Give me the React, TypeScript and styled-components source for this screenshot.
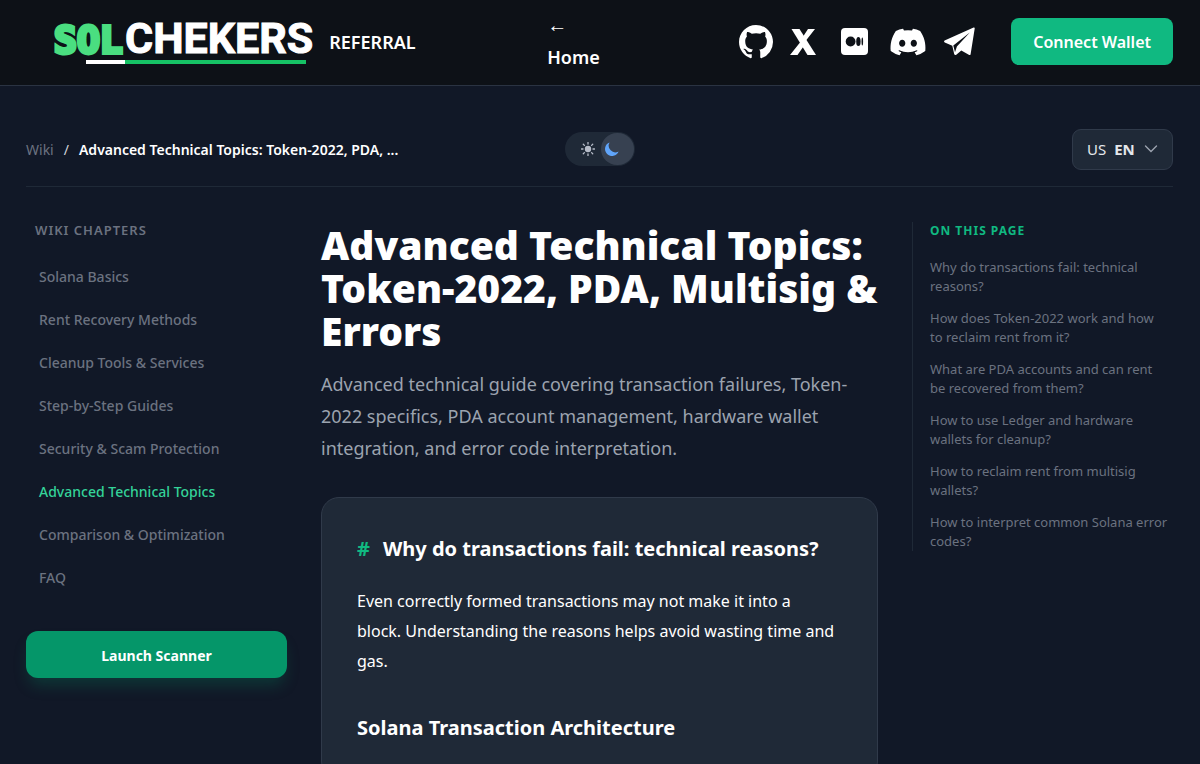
import React, { useState } from "react";
import styled, { createGlobalStyle } from "styled-components";
import { FaDiscord } from "react-icons/fa6";
import { BsGithub } from "react-icons/bs";

const GlobalStyle = createGlobalStyle`
  *, *::before, *::after { box-sizing: border-box; }
  html { scrollbar-width: none; }
  body {
    margin: 0;
    background: #111827;
    color: #fff;
    font-family: "Noto Sans", "Open Sans", sans-serif;
    font-size: 16px;
    -webkit-font-smoothing: antialiased;
  }
  h1, h2, h3, p, ul, ol { margin: 0; padding: 0; }
  ul, ol { list-style: none; }
  a { color: inherit; text-decoration: none; }
  button, select, input { font: inherit; }
`;

const Header = styled.header`
  display: flex;
  align-items: center;
  justify-content: space-between;
  height: 86px;
  padding: 0 27px 2px 53px;
  background: #0d1117;
  border-bottom: 1px solid #2a3342;
`;

const Brand = styled.div`
  display: flex;
  align-items: center;
  gap: 16px;
`;

const Logo = styled.a`
  display: flex;
  flex-direction: column;
  line-height: 37px;
  white-space: nowrap;
`;

const LogoText = styled.span`
  display: flex;
  align-items: baseline;
`;

const LogoSol = styled.span`
  width: 72px;
  padding-left: 1px;
  color: #4ade80;
  font-family: "DejaVu Sans Mono", monospace;
  font-size: 38px;
  font-weight: 700;
  -webkit-text-stroke: 4px #4ade80;
`;

const LogoName = styled.span`
  font-family: Roboto, sans-serif;
  font-size: 43px;
  font-weight: 700;
  -webkit-text-stroke: 1px #fff;
`;

const LogoRule = styled.span`
  height: 4px;
  margin: 1px 7px 0 33px;
  background: linear-gradient(to right, #fff 39px, #16c265 39px);
`;

const Referral = styled.a`
  font-size: 18px;
  font-weight: 600;
`;

const HomeLink = styled.a`
  display: flex;
  flex-direction: column;
  margin-right: 8px;
  font-size: 18px;
  line-height: 28px;
  font-weight: 600;
`;

const BackArrow = styled.span`
  margin-bottom: 5px;
  font-size: 20px;
  line-height: 26px;
  font-weight: 400;
`;

const Actions = styled.div`
  display: flex;
  align-items: center;
`;

const Socials = styled.nav`
  display: flex;
  align-items: center;
  gap: 17px;
  margin-right: 36px;
`;

const SocialLink = styled.a<{ $spaced?: boolean }>`
  display: flex;
  margin: ${(p) => (p.$spaced ? "0 4px 0 8px" : "0")};
  svg { display: block; }
`;

const ConnectButton = styled.button`
  height: 47px;
  padding: 1px 22px 0;
  border: 0;
  border-radius: 8px;
  background: #10b981;
  color: #fff;
  font-weight: 600;
  cursor: pointer;
`;

const Page = styled.div`
  padding: 26px 27px 26px 26px;
`;

const Toolbar = styled.div`
  display: grid;
  grid-template-columns: 1fr auto 1fr;
  align-items: center;
  height: 75px;
  border-bottom: 1px solid #1f2937;
`;

const Crumbs = styled.ol`
  display: flex;
  gap: 10px;
  font-size: 14px;
`;

const Crumb = styled.li<{ $current?: boolean }>`
  color: ${(p) => (p.$current ? "#fff" : "#6b7280")};
  font-weight: ${(p) => (p.$current ? 600 : 400)};
  white-space: nowrap;
`;

const Slash = styled.li`
  color: #d1d5db;
`;

const ThemeSwitch = styled.button`
  display: flex;
  align-items: center;
  width: 70px;
  height: 34px;
  padding: 0 1px 0 16px;
  border: 0;
  border-radius: 17px;
  background: #1f2937;
  cursor: pointer;
`;

const Knob = styled.span`
  display: grid;
  place-items: center;
  width: 33px;
  height: 32px;
  margin-left: auto;
  padding-right: 10px;
  border-radius: 16px;
  background: #374151;
`;

const LangField = styled.label`
  display: flex;
  justify-self: end;
  align-items: center;
  width: 101px;
  height: 41px;
  padding: 0 14px;
  gap: 8px;
  border: 1px solid #303a4a;
  border-radius: 9px;
  background: #1f2937;
  color: #e5e7eb;
  font-size: 15px;
`;

const LangSelect = styled.select`
  flex: 1;
  min-width: 0;
  padding: 0;
  border: 0;
  appearance: none;
  background: transparent;
  color: #e5e7eb;
  font-size: 15px;
  font-weight: 700;
`;

const Columns = styled.div`
  display: grid;
  grid-template-columns: 261px minmax(0, 1fr) 261px;
  gap: 34px;
  align-items: start;
  padding-top: 35px;
`;

const SideTitle = styled.h2<{ $accent?: boolean }>`
  color: ${(p) => (p.$accent ? "#10b981" : "#6b7280")};
  font-size: ${(p) => (p.$accent ? 12 : 13)}px;
  line-height: 17px;
  font-weight: ${(p) => (p.$accent ? 700 : 600)};
  letter-spacing: 1px;
  text-transform: uppercase;
`;

const Sidebar = styled.aside`
  h2 { padding-left: 9px; }
`;

const ChapterList = styled.ul`
  padding: 16px 0 0 13px;
`;

const ChapterLink = styled.a<{ $active?: boolean }>`
  display: block;
  padding: 11px 0;
  color: ${(p) => (p.$active ? "#34d399" : "#6b7280")};
  font-size: 14px;
  line-height: 21px;
  font-weight: 500;
`;

const LaunchButton = styled.button`
  width: 100%;
  height: 47px;
  margin-top: 32px;
  padding: 1px 0 0;
  border: 0;
  border-radius: 12px;
  background: #059669;
  box-shadow: 0 10px 15px -3px rgba(5, 150, 105, 0.25);
  color: #fff;
  font-size: 14px;
  font-weight: 700;
  cursor: pointer;
`;

const Title = styled.h1`
  padding-top: 1px;
  font-size: 39px;
  line-height: 43px;
  font-weight: 900;
`;

const Lead = styled.p`
  margin-top: 16px;
  color: #9ca3af;
  font-size: 18px;
  line-height: 32px;
`;

const Card = styled.section`
  margin-top: 33px;
  padding: 35px;
  border: 1px solid #303a4a;
  border-radius: 18px;
  background: #1f2937;
`;

const CardTitle = styled.h2`
  display: flex;
  gap: 13px;
  font-size: 20px;
  line-height: 31px;
  font-weight: 700;
  span { color: #10b981; }
`;

const CardText = styled.p`
  max-width: 480px;
  margin-top: 22px;
  line-height: 30px;
`;

const CardSubtitle = styled.h3`
  margin: 37px 0 0;
  font-size: 20px;
  line-height: 30px;
  font-weight: 700;
`;

const Toc = styled.nav`
  padding-left: 17px;
  border-left: 1px solid #1f2937;
`;

const TocList = styled.ul`
  display: grid;
  gap: 13px;
  padding: 19px 5px 0 0;
  color: #6b7280;
  font-size: 13px;
  line-height: 19px;
`;

const XIcon = () => (
  <svg width="26" height="26" viewBox="0 0 26 26" fill="#fff" aria-hidden="true">
    <path d="M1.5 0H9.5L26 26H17.5Z" />
    <path d="M18 0H25L16 11.5L12.8 8ZM0 26L10.2 13.2L13.8 17L7.5 26Z" />
  </svg>
);

const MediumIcon = () => (
  <svg width="27" height="27" viewBox="0 0 27 27" aria-hidden="true">
    <rect width="27" height="27" rx="4" fill="#fff" />
    <g fill="#0d1117">
      <circle cx="9.6" cy="13.5" r="4.9" />
      <ellipse cx="17.4" cy="13.5" rx="2.2" ry="4.6" />
      <ellipse cx="21.3" cy="13.5" rx="0.8" ry="4.1" />
    </g>
  </svg>
);

const PlaneIcon = () => (
  <svg width="31" height="29" viewBox="0 0 31 29" aria-hidden="true">
    <path
      d="M.6 13.6 29.6.5Q30.8.1 30.7 1.5L26.6 27.2Q26.2 28.6 24.8 27.8L17.3 23.4 12.3 27.8Q10.6 28.6 10.2 26.9L8.3 18.8.8 15.6Q-.6 14.6.6 13.6Z"
      fill="#fff"
    />
    <path d="M25.8 5.6 9.3 18.4 11 25.3 12.9 19.6Z" fill="#0d1117" />
  </svg>
);

const SunIcon = () => (
  <svg width="14" height="14" viewBox="0 0 14 14" aria-hidden="true">
    <circle cx="7" cy="7" r="3.2" fill="#b6bcc8" />
    <path
      d="M7 .4v1.6M7 12v1.6M.4 7h1.6M12 7h1.6M2.3 2.3l1.1 1.1M10.6 10.6l1.1 1.1M2.3 11.7l1.1-1.1M10.6 3.4l1.1-1.1"
      stroke="#b6bcc8"
      strokeWidth="1.3"
      strokeLinecap="round"
    />
  </svg>
);

const MoonIcon = () => (
  <svg width="14" height="14" viewBox="0 0 14 14" aria-hidden="true">
    <path d="M4.6.4A7 7 0 1 0 13.6 9.4 6.6 6.6 0 0 1 4.6.4Z" fill="#60a5fa" />
  </svg>
);

const ChevronIcon = () => (
  <svg width="14" height="8" viewBox="0 0 14 8" fill="none" aria-hidden="true">
    <path d="M1.5 1 7 6.5 12.5 1" stroke="#9ca3af" strokeWidth="1.4" strokeLinecap="round" />
  </svg>
);

const chapters = [
  "Solana Basics",
  "Rent Recovery Methods",
  "Cleanup Tools & Services",
  "Step-by-Step Guides",
  "Security & Scam Protection",
  "Advanced Technical Topics",
  "Comparison & Optimization",
  "FAQ",
];

const sections = [
  "Why do transactions fail: technical reasons?",
  "How does Token-2022 work and how to reclaim rent from it?",
  "What are PDA accounts and can rent be recovered from them?",
  "How to use Ledger and hardware wallets for cleanup?",
  "How to reclaim rent from multisig wallets?",
  "How to interpret common Solana error codes?",
];

export default function App() {
  const [dark, setDark] = useState(true);
  return (
    <>
      <GlobalStyle />
      <Header>
        <Brand>
          <Logo href="#">
            <LogoText>
              <LogoSol>SOL</LogoSol>
              <LogoName>CHEKERS</LogoName>
            </LogoText>
            <LogoRule />
          </Logo>
          <Referral href="#referral">REFERRAL</Referral>
        </Brand>
        <HomeLink href="#home">
          <BackArrow>←</BackArrow>
          <span>Home</span>
        </HomeLink>
        <Actions>
          <Socials aria-label="Social links">
            <SocialLink href="#github" aria-label="GitHub"><BsGithub size={34} /></SocialLink>
            <SocialLink href="#x" aria-label="X"><XIcon /></SocialLink>
            <SocialLink href="#medium" aria-label="Medium" $spaced><MediumIcon /></SocialLink>
            <SocialLink href="#discord" aria-label="Discord"><FaDiscord size={38} /></SocialLink>
            <SocialLink href="#telegram" aria-label="Telegram"><PlaneIcon /></SocialLink>
          </Socials>
          <ConnectButton type="button">Connect Wallet</ConnectButton>
        </Actions>
      </Header>
      <Page>
        <Toolbar>
          <Crumbs>
            <Crumb><a href="#wiki">Wiki</a></Crumb>
            <Slash aria-hidden="true">/</Slash>
            <Crumb $current aria-current="page">Advanced Technical Topics: Token-2022, PDA, ...</Crumb>
          </Crumbs>
          <ThemeSwitch
            type="button"
            role="switch"
            aria-checked={dark}
            aria-label="Dark theme"
            onClick={() => setDark(!dark)}
          >
            <SunIcon />
            <Knob><MoonIcon /></Knob>
          </ThemeSwitch>
          <LangField>
            <span>US</span>
            <LangSelect aria-label="Language" defaultValue="en">
              <option value="en">EN</option>
            </LangSelect>
            <ChevronIcon />
          </LangField>
        </Toolbar>
        <Columns>
          <Sidebar>
            <SideTitle>Wiki chapters</SideTitle>
            <ChapterList>
              {chapters.map((c) => (
                <li key={c}>
                  <ChapterLink href="#" $active={c === "Advanced Technical Topics"}>{c}</ChapterLink>
                </li>
              ))}
            </ChapterList>
            <LaunchButton type="button">Launch Scanner</LaunchButton>
          </Sidebar>
          <main>
            <Title>Advanced Technical Topics: Token-2022, PDA, Multisig &amp; Errors</Title>
            <Lead>
              Advanced technical guide covering transaction failures, Token-2022 specifics, PDA account
              management, hardware wallet integration, and error code interpretation.
            </Lead>
            <Card>
              <CardTitle>
                <span>#</span>
                Why do transactions fail: technical reasons?
              </CardTitle>
              <CardText>
                Even correctly formed transactions may not make it into a block. Understanding the
                reasons helps avoid wasting time and gas.
              </CardText>
              <CardSubtitle>Solana Transaction Architecture</CardSubtitle>
            </Card>
          </main>
          <Toc aria-label="On this page">
            <SideTitle $accent>On this page</SideTitle>
            <TocList>
              {sections.map((s) => (
                <li key={s}><a href="#">{s}</a></li>
              ))}
            </TocList>
          </Toc>
        </Columns>
      </Page>
    </>
  );
}
